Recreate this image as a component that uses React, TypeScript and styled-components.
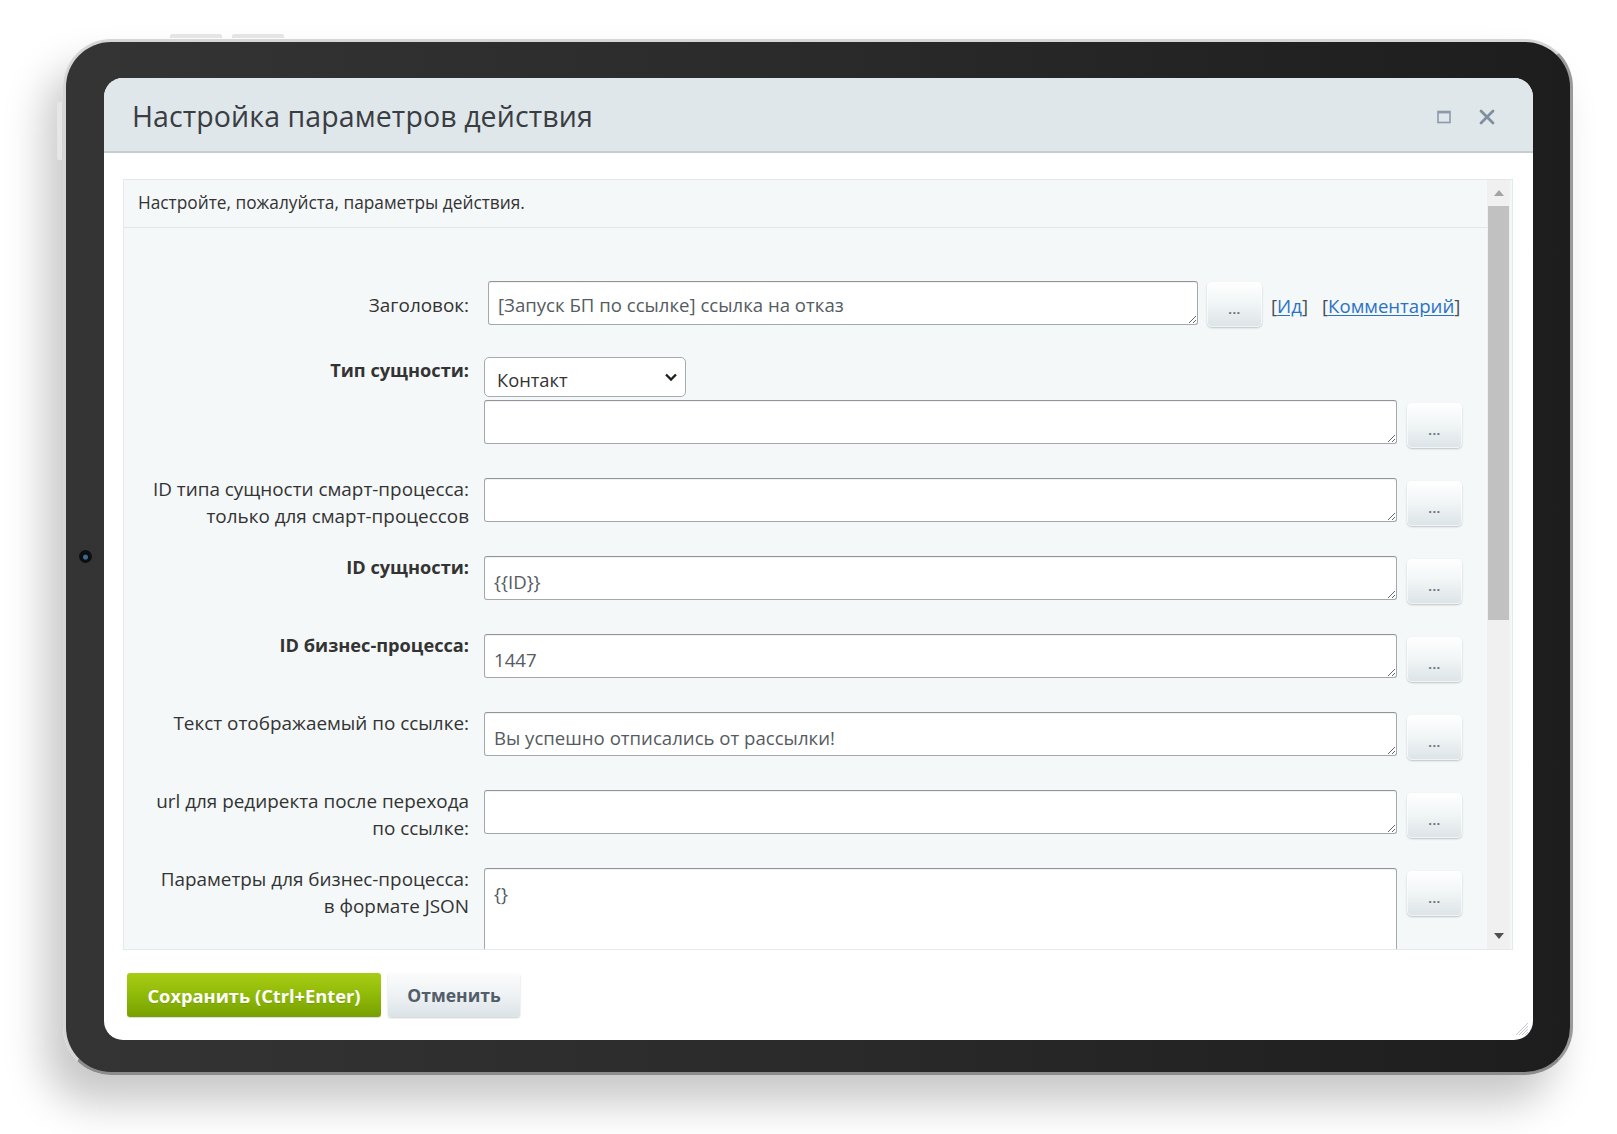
import * as React from "react";
import styled, { createGlobalStyle } from "styled-components";

const GlobalStyle = createGlobalStyle`
  html, body {
    margin: 0;
    padding: 0;
    background: #ffffff;
  }
  body {
    font-family: "Open Sans", "Noto Sans", Arial, sans-serif;
    color: #333;
  }
  * {
    box-sizing: border-box;
  }
`;

type Field = {
  label: string;
  hint?: string;
  bold?: boolean;
  value?: string;
  tall?: boolean;
};

const fields: Field[] = [
  { label: "ID типа сущности смарт-процесса:", hint: "только для смарт-процессов" },
  { label: "ID сущности:", bold: true, value: "{{ID}}" },
  { label: "ID бизнес-процесса:", bold: true, value: "1447" },
  { label: "Текст отображаемый по ссылке:", value: "Вы успешно отписались от рассылки!" },
  { label: "url для редиректа после перехода", hint: "по ссылке:" },
  { label: "Параметры для бизнес-процесса:", hint: "в формате JSON", value: "{}", tall: true },
];

const Page = styled.div`
  width: 1617px;
  height: 1134px;
  padding: 39px 44px 0 63px;
  overflow: hidden;
`;

const Device = styled.div`
  position: relative;
  width: 1510px;
  height: 1036px;
  padding: 36px 37px 32px 38px;
  border-radius: 48px;
  border: 3px solid #d6d6d6;
  border-right-color: #9a9a9a;
  border-bottom-color: #8c8c8c;
  background: linear-gradient(90deg, #343434 0%, #2a2a2a 50%, #1d1d1d 100%);
  box-shadow: -18px 28px 42px rgba(0, 0, 0, 0.22);
`;

const TopKey = styled.div<{ $left: number }>`
  position: absolute;
  top: -8px;
  left: ${(p) => p.$left}px;
  width: 52px;
  height: 4px;
  border-radius: 2px 2px 0 0;
  background: #e4e4e4;
`;

const SideKey = styled.div`
  position: absolute;
  left: -9px;
  top: 60px;
  width: 5px;
  height: 58px;
  border-radius: 2px 0 0 2px;
  background: #e6e6e6;
`;

const Camera = styled.div`
  position: absolute;
  left: 13px;
  top: 50%;
  width: 13px;
  height: 13px;
  margin-top: -7px;
  border-radius: 50%;
  background: radial-gradient(circle at 50% 55%, #3d6a8c 0 2px, #0c0f12 3px);
`;

const Screen = styled.div`
  position: relative;
  width: 100%;
  height: 100%;
  border-radius: 19px;
  overflow: hidden;
  background: #ffffff;
  display: flex;
  flex-direction: column;
`;

const Header = styled.div`
  height: 75px;
  flex: none;
  display: flex;
  align-items: center;
  justify-content: space-between;
  padding: 0 38px 0 28px;
  background: #dfe7ea;
  border-bottom: 2px solid #c6ced2;
`;

const Title = styled.div`
  font-size: 28.5px;
  font-weight: 400;
  color: #3a3d42;
  letter-spacing: 0.1px;
  padding-top: 2px;
`;

const HeaderTools = styled.div`
  display: flex;
  align-items: center;
  gap: 28px;
  padding-top: 4px;
`;

const Body = styled.div`
  padding: 26px 20px 0 19px;
`;

const Panel = styled.div`
  height: 771px;
  display: flex;
  border: 1px solid #e3eaed;
  background: #f5f8f9;
`;

const PanelMain = styled.div`
  flex: 1;
  min-width: 0;
  overflow: hidden;
`;

const Intro = styled.div`
  height: 48px;
  display: flex;
  align-items: center;
  padding: 0 14px 2px;
  font-size: 17.3px;
  color: #333;
  border-bottom: 1px solid #dfe8eb;
`;

const Form = styled.div`
  display: grid;
  grid-template-columns: 345px 1fr;
  column-gap: 15px;
  padding: 53px 25px 0 0;
`;

const Label = styled.div<{ $bold?: boolean; $shift?: number }>`
  text-align: right;
  font-size: ${(p) => (p.$bold ? 18.2 : 18.9)}px;
  line-height: 27px;
  font-weight: ${(p) => (p.$bold ? 700 : 400)};
  color: #333;
  margin-top: ${(p) => p.$shift ?? -2}px;
  white-space: nowrap;
`;

const FieldCell = styled.div<{ $gapBelow: number }>`
  display: flex;
  flex-direction: column;
  gap: 3px;
  padding-bottom: ${(p) => p.$gapBelow}px;
`;

const InputLine = styled.div<{ $gap?: number; $indent?: number }>`
  display: flex;
  align-items: flex-start;
  gap: ${(p) => p.$gap ?? 10}px;
  padding-left: ${(p) => p.$indent ?? 0}px;
  height: 44px;
`;

const Area = styled.textarea<{ $h: number; $top: number; $w?: number }>`
  display: block;
  flex: ${(p) => (p.$w ? "none" : "1")};
  width: ${(p) => (p.$w ? `${p.$w}px` : "auto")};
  min-width: 0;
  height: ${(p) => p.$h}px;
  margin: 0;
  padding: ${(p) => p.$top}px 8px 0 9px;
  font-family: "Open Sans", "Noto Sans", Arial, sans-serif;
  font-size: 18.6px;
  line-height: 24px;
  color: #555b61;
  background: #ffffff;
  border: 1px solid #a3a8ad;
  border-top-color: #8f959b;
  border-radius: 3px;
  box-shadow: inset 0 1px 1px rgba(0, 0, 0, 0.06);
  resize: vertical;
  overflow: hidden;
  outline: none;
`;

const DotsButton = styled.button<{ $top?: number }>`
  flex: none;
  width: 55px;
  height: 45px;
  margin-top: ${(p) => p.$top ?? 3}px;
  padding: 8px 0 0;
  border: none;
  border-radius: 5px;
  background: linear-gradient(180deg, #ffffff 0%, #f2f6f7 45%, #dce4e7 100%);
  box-shadow: 0 1px 2px rgba(0, 0, 0, 0.22), inset 0 0 0 1px rgba(255, 255, 255, 0.6);
  font-family: "Open Sans", Arial, sans-serif;
  font-size: 13px;
  font-weight: 700;
  color: #6b737b;
  letter-spacing: 0.5px;
`;

const LinkGroup = styled.div`
  display: flex;
  gap: 14px;
  align-self: center;
  padding-top: 5px;
  font-size: 18.6px;
  color: #4a4f55;
  white-space: nowrap;
`;

const Link = styled.a`
  color: #2a72c4;
  text-decoration: underline;
  text-underline-offset: 2px;
`;

const SelectBox = styled.div`
  position: relative;
  width: 202px;
  height: 40px;
`;

const Select = styled.select`
  width: 100%;
  height: 100%;
  appearance: none;
  -webkit-appearance: none;
  padding: 4px 30px 0 12px;
  font-family: "Open Sans", Arial, sans-serif;
  font-size: 18.3px;
  color: #333;
  background: #ffffff;
  border: 1px solid #a6abb0;
  border-radius: 5px;
  outline: none;
`;

const Chevron = styled.svg`
  position: absolute;
  right: 8px;
  top: 15px;
  pointer-events: none;
`;

const ScrollTrack = styled.div`
  flex: none;
  width: 23px;
  margin-right: 2px;
  display: flex;
  flex-direction: column;
  align-items: center;
  background: #f0f0f0;
`;

const ScrollArrow = styled.div`
  flex: none;
  height: 26px;
  width: 100%;
  display: flex;
  align-items: center;
  justify-content: center;
`;

const ScrollThumb = styled.div`
  width: 21px;
  height: 414px;
  background: #c1c1c1;
`;

const ScrollSpace = styled.div`
  flex: 1;
`;

const Footer = styled.div`
  display: flex;
  gap: 7px;
  padding: 23px 23px 0;
`;

const SaveButton = styled.button`
  width: 254px;
  height: 44px;
  border: none;
  border-radius: 3px;
  background: linear-gradient(180deg, #a8cc14 0%, #8fba08 50%, #77a000 100%);
  box-shadow: 0 1px 1px rgba(0, 0, 0, 0.15);
  font-family: "Open Sans", Arial, sans-serif;
  font-size: 18.3px;
  font-weight: 700;
  color: #ffffff;
  text-shadow: 0 1px 0 rgba(0, 0, 0, 0.12);
`;

const CancelButton = styled.button`
  width: 132px;
  height: 44px;
  border: none;
  border-radius: 3px;
  background: linear-gradient(180deg, #fbfcfc 0%, #eef2f4 50%, #dbe3e6 100%);
  box-shadow: 0 1px 2px rgba(0, 0, 0, 0.2);
  font-family: "Open Sans", Arial, sans-serif;
  font-size: 17.5px;
  font-weight: 700;
  color: #535c69;
`;

const Grip = styled.svg`
  position: absolute;
  right: 4px;
  bottom: 4px;
`;

const MaxIcon = () => (
  <svg width="14" height="14" viewBox="0 0 14 14">
    <rect x="1" y="1.5" width="12" height="11" fill="none" stroke="#8b9aaa" strokeWidth="1.6" />
    <rect x="1" y="1" width="12" height="2.4" fill="#8b9aaa" />
  </svg>
);

const CloseIcon = () => (
  <svg width="16" height="16" viewBox="0 0 16 16">
    <path d="M2 2 L14 14 M14 2 L2 14" stroke="#7f8fa0" strokeWidth="2.8" strokeLinecap="round" />
  </svg>
);

const FieldRow = (p: { f: Field; last: boolean }) => (
  <>
    <Label $bold={p.f.bold}>
      {p.f.label}
      {p.f.hint && (
        <>
          <br />
          {p.f.hint}
        </>
      )}
    </Label>
    <FieldCell $gapBelow={p.last ? 0 : 34}>
      <InputLine>
        <Area $h={p.f.tall ? 140 : 44} $top={13} defaultValue={p.f.value ?? ""} />
        <DotsButton>...</DotsButton>
      </InputLine>
    </FieldCell>
  </>
);

export default function App() {
  return (
    <>
      <GlobalStyle />
      <Page>
        <Device>
          <TopKey $left={104} />
          <TopKey $left={166} />
          <SideKey />
          <Camera />
          <Screen>
            <Header>
              <Title>Настройка параметров действия</Title>
              <HeaderTools>
                <MaxIcon />
                <CloseIcon />
              </HeaderTools>
            </Header>
            <Body>
              <Panel>
                <PanelMain>
                  <Intro>Настройте, пожалуйста, параметры действия.</Intro>
                  <Form>
                    <Label $shift={11}>Заголовок:</Label>
                    <FieldCell $gapBelow={32}>
                      <InputLine $gap={9} $indent={4}>
                        <Area
                          $h={44}
                          $w={710}
                          $top={11}
                          defaultValue="[Запуск БП по ссылке] ссылка на отказ"
                        />
                        <DotsButton $top={1}>...</DotsButton>
                        <LinkGroup>
                          <span>
                            [<Link>Ид</Link>]
                          </span>
                          <span>
                            [<Link>Комментарий</Link>]
                          </span>
                        </LinkGroup>
                      </InputLine>
                    </FieldCell>

                    <Label $bold $shift={0}>Тип сущности:</Label>
                    <FieldCell $gapBelow={34}>
                      <SelectBox>
                        <Select defaultValue="contact">
                          <option value="contact">Контакт</option>
                          <option value="company">Компания</option>
                          <option value="deal">Сделка</option>
                        </Select>
                        <Chevron width="14" height="10" viewBox="0 0 14 10">
                          <path d="M2 2.5 L7 7.5 L12 2.5" fill="none" stroke="#1f1f1f" strokeWidth="2.4" />
                        </Chevron>
                      </SelectBox>
                      <InputLine>
                        <Area $h={44} $top={13} defaultValue="" />
                        <DotsButton>...</DotsButton>
                      </InputLine>
                    </FieldCell>

                    {fields.map((f, i) => (
                      <FieldRow key={f.label} f={f} last={i === fields.length - 1} />
                    ))}
                  </Form>
                </PanelMain>
                <ScrollTrack>
                  <ScrollArrow>
                    <svg width="10" height="6" viewBox="0 0 10 6">
                      <path d="M0 6 L5 0 L10 6 Z" fill="#a3a3a3" />
                    </svg>
                  </ScrollArrow>
                  <ScrollThumb />
                  <ScrollSpace />
                  <ScrollArrow>
                    <svg width="10" height="6" viewBox="0 0 10 6">
                      <path d="M0 0 L10 0 L5 6 Z" fill="#505050" />
                    </svg>
                  </ScrollArrow>
                </ScrollTrack>
              </Panel>
            </Body>
            <Footer>
              <SaveButton>Сохранить (Ctrl+Enter)</SaveButton>
              <CancelButton>Отменить</CancelButton>
            </Footer>
            <Grip width="18" height="18" viewBox="0 0 18 18">
              <path
                d="M17 5 L5 17 M17 8 L8 17 M17 11 L11 17 M17 14 L14 17"
                stroke="#c4c8cc"
                strokeWidth="1"
              />
            </Grip>
          </Screen>
        </Device>
      </Page>
    </>
  );
}
